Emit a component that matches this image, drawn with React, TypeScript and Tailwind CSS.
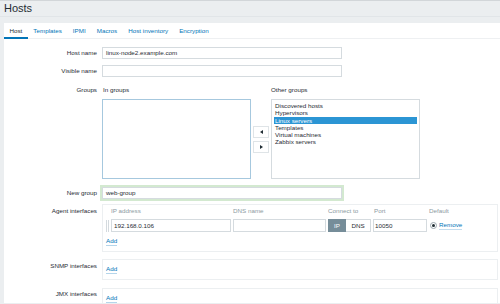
import React from "react";

const Label = ({ children, cls }: { children: React.ReactNode; cls: string }) => (
  <div className={`w-[93px] mr-[5px] shrink-0 text-right ${cls}`}>{children}</div>
);

const Input = ({ value, w, cls = "" }: { value?: string; w: string; cls?: string }) => (
  <div className={`${w} h-[12px] border border-[#d5dbdf] bg-white pl-[3px] leading-[10px] whitespace-nowrap overflow-hidden ${cls}`}>
    {value}
  </div>
);

const Handle = () => (
  <svg width="3" height="12" viewBox="0 0 3 12" className="shrink-0">
    {[0, 1, 2, 3, 4, 5].map((i) => (
      <g key={i} fill="#a9b6bd">
        <rect x="0" y={i * 2 + 0.5} width="1" height="1" />
        <rect x="2" y={i * 2 + 0.5} width="1" height="1" />
      </g>
    ))}
  </svg>
);

const AddLink = () => (
  <span className="text-[#0275b8] border-b border-[#b5d5ea] leading-[7px] h-[9px]">Add</span>
);

export default function App() {
  const tabs = ["Host", "Templates", "IPMI", "Macros", "Host inventory", "Encryption"];
  const groups = ["Discovered hosts", "Hypervisors", "Linux servers", "Templates", "Virtual machines", "Zabbix servers"];
  return (
    <div className="w-[500px] h-[304px] overflow-hidden bg-[#ebeef0] border-t border-[#d2d6d9] flex flex-col font-['Liberation_Sans',Arial,sans-serif] text-[#1f2c33] text-[6.25px]">
      <div className="h-[15px] shrink-0 pl-[4px] pt-[1px] text-[11px] leading-[13px]">Hosts</div>
      <div className="h-px shrink-0 bg-[#e1e5e8]" />
      <div className="h-[6px] shrink-0" />
      <div className="ml-[4px] flex-1 bg-white flex flex-col overflow-hidden">
        <div className="h-[16px] shrink-0 flex shadow-[inset_0_-1px_0_#eef0f2]">
          {tabs.map((t, i) => (
            <div
              key={t}
              className={`px-[5.5px] h-full leading-[16px] ${
                i === 0 ? "text-[#1f2c33] shadow-[inset_0_-2px_0_#0275b8]" : "text-[#0275b8]"
              }`}
            >
              {t}
            </div>
          ))}
        </div>
        <div className="pt-[8px] flex flex-col">
          <div className="flex">
            <Label cls="leading-[12px]">Host name</Label>
            <Input value="linux-node2.example.com" w="w-[240px]" />
          </div>
          <div className="flex mt-[6px]">
            <Label cls="leading-[12px]">Visible name</Label>
            <Input w="w-[240px]" />
          </div>
          <div className="flex mt-[9px]">
            <Label cls="leading-[8px]">Groups</Label>
            <div className="flex flex-col">
              <div className="flex h-[8px] leading-[8px]">
                <div className="w-[169px] pl-[1px]">In groups</div>
                <div>Other groups</div>
              </div>
              <div className="flex items-center mt-[5px]">
                <div className="w-[149px] h-[80px] border border-[#a6c8de]" />
                <div className="flex flex-col gap-[3px] mx-[2px]">
                  <div className="w-[16px] h-[12px] border border-[#dfe4e7] bg-white flex items-center justify-center">
                    <svg width="3" height="4" viewBox="0 0 3 4"><path d="M0 2 L3 0 L3 4 Z" fill="#1f2c33" /></svg>
                  </div>
                  <div className="w-[16px] h-[12px] border border-[#dfe4e7] bg-white flex items-center justify-center">
                    <svg width="3" height="4" viewBox="0 0 3 4"><path d="M3 2 L0 0 L0 4 Z" fill="#1f2c33" /></svg>
                  </div>
                </div>
                <div className="w-[149px] h-[80px] border border-[#d5dbdf] px-[2px] pt-[2px]">
                  {groups.map((g, i) => (
                    <div
                      key={g}
                      className={`pl-[1px] leading-[7.3px] h-[7.3px] whitespace-nowrap ${
                        i === 2 ? "bg-[#2b95d4] text-white" : ""
                      }`}
                    >
                      {g}
                    </div>
                  ))}
                </div>
              </div>
            </div>
          </div>
          <div className="flex mt-[6px] h-[16px]">
            <Label cls="leading-[16px]">New group</Label>
            <Input
              value="web-group"
              w="w-[240px]"
              cls="my-[2px] border-[#a9d4a3] shadow-[0_0_0_2px_#d3e9d0]"
            />
          </div>
          <div className="flex mt-[3px]">
            <Label cls="pt-[3px] leading-[8px]">Agent interfaces</Label>
            <div className="w-[396px] h-[48px] border border-[#eceff1] pl-[3px] pt-[2px] flex flex-col">
              <div className="flex leading-[8px] text-[#8c9aa2] whitespace-nowrap">
                <div className="w-[5px]" />
                <div className="w-[122px]">IP address</div>
                <div className="w-[95px]">DNS name</div>
                <div className="w-[45px]">Connect to</div>
                <div className="w-[56px] pl-[1px]">Port</div>
                <div>Default</div>
              </div>
              <div className="flex items-center mt-[4px] h-[13px]">
                <Handle />
                <div className="ml-[2px] w-[120px] h-[13px] border border-[#d5dbdf] pl-[2px] leading-[11px]">192.168.0.106</div>
                <div className="ml-[2px] w-[93px] h-[13px] border border-[#d5dbdf]" />
                <div className="ml-[2px] flex h-[13px]">
                  <div className="w-[18px] bg-[#768d99] text-white text-center leading-[13px]">IP</div>
                  <div className="w-[25px] border border-[#d5dbdf] border-l-0 text-center leading-[11px]">DNS</div>
                </div>
                <div className="ml-[2px] w-[54px] h-[13px] border border-[#d5dbdf] pl-[1px] leading-[11px]">10050</div>
                <div className="ml-[3px] w-[7px] h-[7px] rounded-full border border-[#9aa7ae] flex items-center justify-center">
                  <div className="w-[3px] h-[3px] rounded-full bg-[#1f2c33]" />
                </div>
                <div className="ml-[2px] text-[#0275b8] leading-[8px] border-b border-[#c4ddee]">Remove</div>
              </div>
              <div className="mt-[5px] leading-[8px] flex">
                <AddLink />
              </div>
            </div>
          </div>
          <div className="flex mt-[7px]">
            <Label cls="pt-[3px] leading-[8px]">SNMP interfaces</Label>
            <div className="w-[396px] h-[21px] border border-[#eceff1] pl-[3px] pt-[5px] flex">
              <AddLink />
            </div>
          </div>
          <div className="flex mt-[8px]">
            <Label cls="pt-[2px] leading-[8px]">JMX interfaces</Label>
            <div className="w-[396px] h-[20px] border border-[#eceff1] pl-[3px] pt-[5px] flex">
              <AddLink />
            </div>
          </div>
        </div>
      </div>
      <div className="h-px shrink-0" />
    </div>
  );
}
